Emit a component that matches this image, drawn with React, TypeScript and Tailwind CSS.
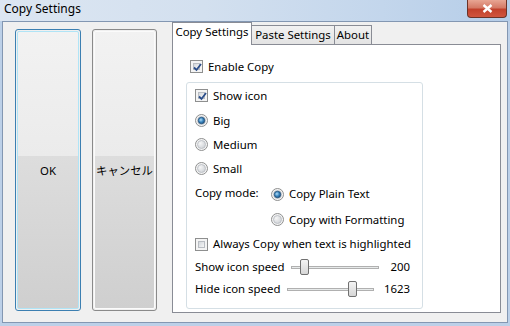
import React from 'react';

// Windows 7 style "Copy Settings" dialog

function CheckBox({ checked }: { checked: boolean }) {
  return (
    <span className="w-[13px] h-[13px] shrink-0 border border-[#8e8f8f] bg-[#f4f4f4] p-[2px] flex">
      <span className="relative flex-1 border border-[#b9bdc3] bg-gradient-to-br from-[#d3d7dc] to-[#f7f7f7]">
        {checked && (
          <svg className="absolute -left-[2px] -top-[2px]" width="11" height="11" viewBox="0 0 11 11">
            <path d="M2 5.5 L4.5 8 L9 2" fill="none" stroke="#2a4d8a" strokeWidth="1.8" />
          </svg>
        )}
      </span>
    </span>
  );
}

function Radio({ checked }: { checked: boolean }) {
  const id = checked ? 'rOn' : 'rOff';
  return (
    <svg width="13" height="13" viewBox="0 0 13 13" className="shrink-0">
      <defs>
        <radialGradient id={id + 'in'} cx="0.35" cy="0.35" r="0.8">
          <stop offset="0" stopColor="#f6f6f6" />
          <stop offset="1" stopColor="#c9cdd2" />
        </radialGradient>
        <radialGradient id={id + 'dot'} cx="0.4" cy="0.4" r="0.7">
          <stop offset="0" stopColor="#b3dcf7" />
          <stop offset="0.5" stopColor="#3a87c0" />
          <stop offset="1" stopColor="#1c4a78" />
        </radialGradient>
      </defs>
      <circle cx="6.5" cy="6.5" r="6" fill="#f4f4f4" stroke="#8e8f8f" />
      <circle cx="6.5" cy="6.5" r="4" fill={`url(#${id}in)`} stroke="#b6bac0" strokeWidth="0.8" />
      {checked && <circle cx="6.5" cy="6.5" r="3.2" fill={`url(#${id}dot)`} stroke="#1f4f7a" strokeWidth="0.8" />}
    </svg>
  );
}

function Slider({ label, value, trackClass, thumbClass }: { label: string; value: string; trackClass: string; thumbClass: string }) {
  return (
    <div className="h-[22px] flex items-center">
      <span className="w-[92px]">{label}</span>
      <div className={`relative h-[22px] ${trackClass}`}>
        <div className="absolute left-0 right-0 top-[10px] h-[3px] border border-[#b0b0b0] bg-[#e7eaea]" />
        <div className={`absolute top-[3px] w-[9px] h-[16px] rounded-[2px] border border-[#707070] bg-gradient-to-b from-[#f4f4f4] to-[#d6d6d6] ${thumbClass}`} />
      </div>
      <span className="ml-auto">{value}</span>
    </div>
  );
}

function DialogButton({ label, isDefault }: { label: string; isDefault?: boolean }) {
  return (
    <div
      className={`h-full rounded-[3px] border p-px ${
        isDefault ? 'w-[66px] border-[#3c7fb1]' : 'w-[65px] border-[#8a8a8a]'
      }`}
    >
      <div
        className={`h-full rounded-[2px] border flex items-center justify-center bg-[linear-gradient(to_bottom,#f2f2f2_0%,#ebebeb_45%,#dddddd_45%,#cfcfcf_100%)] ${
          isDefault ? 'border-[#b0e4f6]' : 'border-[#fbfbfb]'
        }`}
      >
        <span className="pt-[2px]">{label}</span>
      </div>
    </div>
  );
}

export default function App() {
  return (
    <div className="w-[510px] h-[326px] flex flex-col bg-[#bcd0e8] font-['Noto_Sans','Noto_Sans_CJK_JP',sans-serif] text-[11.4px] text-black leading-none whitespace-nowrap">
      {/* Title bar */}
      <div className="h-[21px] flex items-start bg-[linear-gradient(to_right,#dce6f2_0%,#d3e0ef_40%,#c3d6ec_75%,#b5cde8_100%)]">
        <span className="pl-[4px] pt-[3px] text-[12px]">Copy Settings</span>
        <div className="ml-auto mr-[3px] w-[40px] h-[18px] rounded-b-[4px] border border-t-0 border-[#6b3328] bg-[linear-gradient(to_bottom,#e8a593_0%,#d57a66_45%,#c2412c_55%,#d0553e_100%)] flex items-center justify-center">
          <svg width="11" height="9" viewBox="0 0 11 9">
            <path d="M1.5 1 L9.5 8 M9.5 1 L1.5 8" stroke="#fff" strokeWidth="2.4" />
          </svg>
        </div>
      </div>

      {/* Client area */}
      <div className="flex-1 mx-[2px] mb-[3px] border border-[#8397b2] bg-[#f0f0f0] flex pl-[12px] pr-[6px]">
        <div className="flex gap-[11px] pt-[7px] pb-[11px]">
          <DialogButton label="OK" isDefault />
          <DialogButton label="キャンセル" />
        </div>

        {/* Tab control */}
        <div className="ml-[15px] flex-1 flex flex-col pb-[9px]">
          <div className="h-[22px] flex items-end relative z-10">
            <div className="w-[80px] h-[23px] -mb-px border border-b-0 border-[#898c95] bg-white flex items-center justify-center pb-[4px]">
              Copy Settings
            </div>
            <div className="w-[83px] h-[19px] border border-l-0 border-b-0 border-[#898c95] bg-gradient-to-b from-[#f2f2f2] to-[#e3e3e3] flex items-center justify-center">
              Paste Settings
            </div>
            <div className="w-[37px] h-[19px] border border-l-0 border-b-0 border-[#898c95] bg-gradient-to-b from-[#f2f2f2] to-[#e3e3e3] flex items-center justify-center">
              About
            </div>
          </div>
          <div className="flex-1 border border-[#898c95] bg-white pl-[13px] pt-[15px]">
            <div className="h-[13px] flex items-center gap-[5px] pl-[4px]">
              <CheckBox checked />
              <span>Enable Copy</span>
            </div>

            <div className="mt-[9px] w-[237px] h-[227px] rounded-[3px] border border-[#d5dfe5] flex flex-col pl-[8px] pr-[12px]">
              <div className="h-[25px] flex items-center gap-[5px]">
                <CheckBox checked />
                <span>Show icon</span>
              </div>
              <div className="h-[25px] flex items-center gap-[5px]">
                <Radio checked />
                <span>Big</span>
              </div>
              <div className="h-[23px] flex items-center gap-[5px]">
                <Radio checked={false} />
                <span>Medium</span>
              </div>
              <div className="h-[25px] flex items-center gap-[5px]">
                <Radio checked={false} />
                <span>Small</span>
              </div>
              <div className="h-[26px] flex items-center">
                <span className="w-[76px] -mt-[3px]">Copy mode:</span>
                <Radio checked />
                <span className="ml-[5px]">Copy Plain Text</span>
              </div>
              <div className="h-[25px] flex items-center pl-[76px]">
                <Radio checked={false} />
                <span className="ml-[5px]">Copy with Formatting</span>
              </div>
              <div className="h-[24px] flex items-center gap-[5px]">
                <CheckBox checked={false} />
                <span>Always Copy when text is highlighted</span>
              </div>
              <Slider label="Show icon speed" value="200" trackClass="w-[88px] ml-[4px]" thumbClass="left-[9px]" />
              <Slider label="Hide icon speed" value="1623" trackClass="w-[87px]" thumbClass="left-[61px]" />
            </div>
          </div>
        </div>
      </div>
    </div>
  );
}
